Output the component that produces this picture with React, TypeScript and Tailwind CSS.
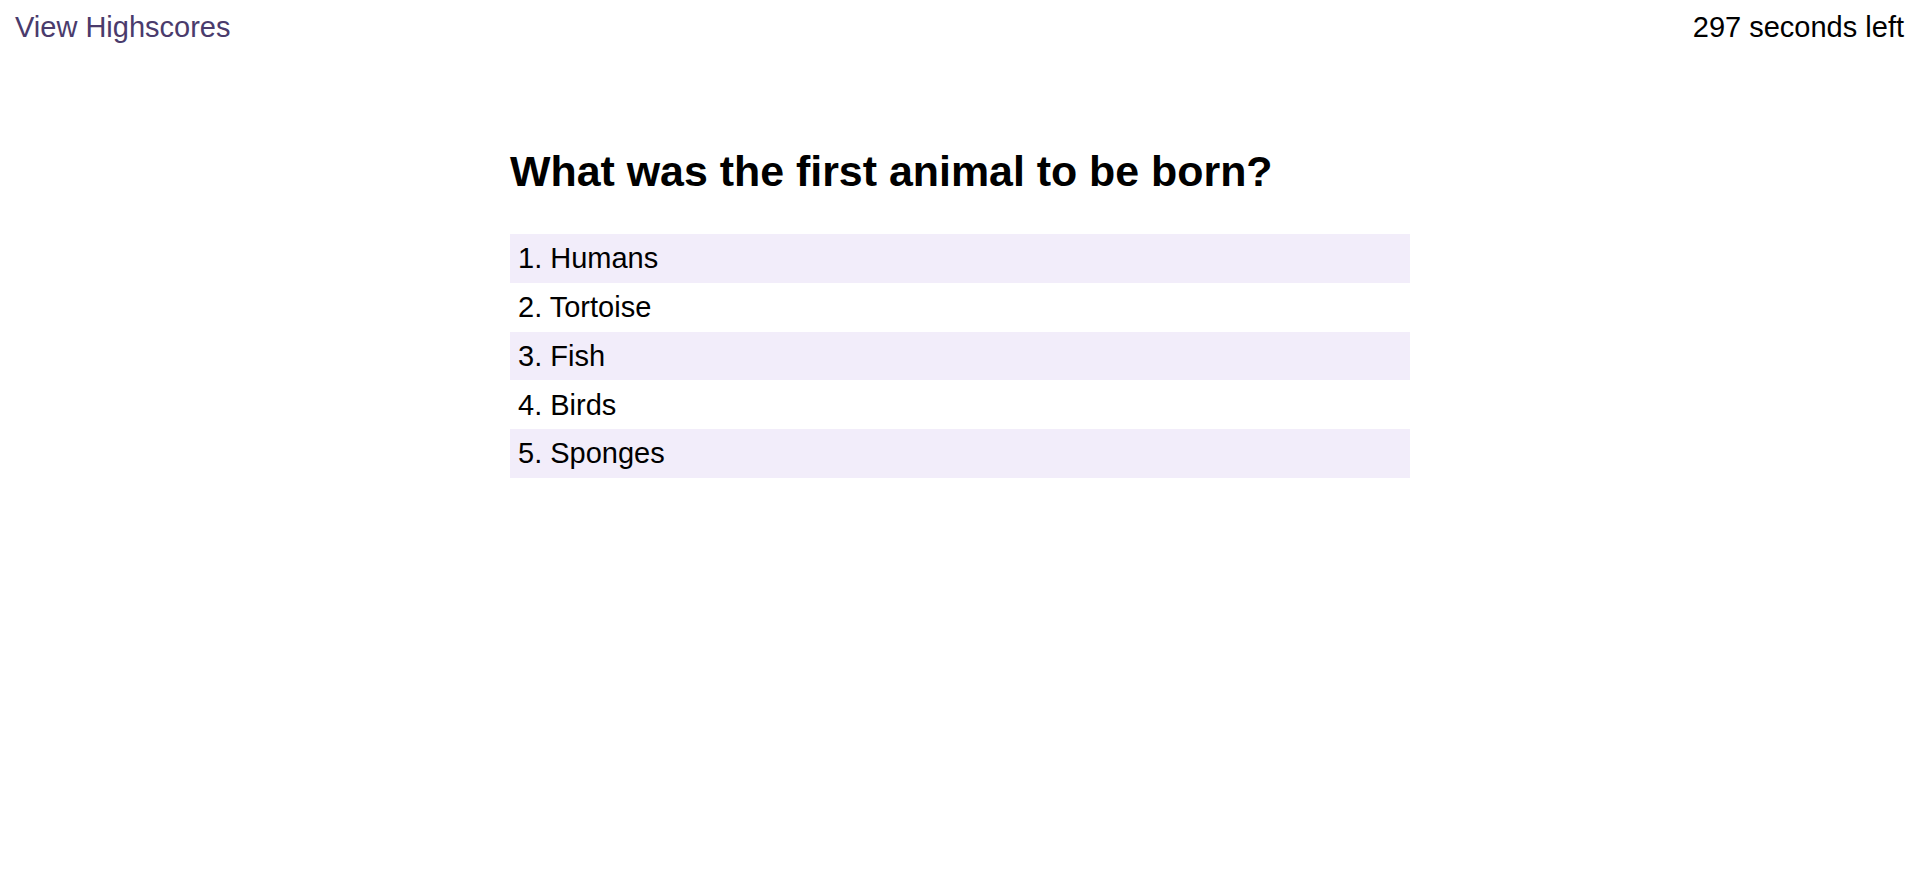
import React from "react";

const answers = ["1. Humans", "2. Tortoise", "3. Fish", "4. Birds", "5. Sponges"];

export default function App() {
  return (
    <div className="min-h-[884px] w-full bg-white text-black" style={{ fontFamily: '"Liberation Sans", Arial, sans-serif' }}>
      <header className="flex items-start justify-between pl-[15px] pr-[16px] pt-[11px]">
        <a className="text-[29px] leading-[33px] text-[#4a3b6c] cursor-pointer">View Highscores</a>
        <div className="text-[29px] leading-[33px] text-black">297 seconds left</div>
      </header>
      <main className="mx-auto w-[900px] pt-[103px]">
        <h1 className="text-[42.9px] font-bold leading-[49px] text-black">What was the first animal to be born?</h1>
        <ol className="mt-[38px]">
          {answers.map((a, i) => (
            <li
              key={a}
              className={`flex h-[48.8px] items-center pl-[8px] pt-[1px] text-[29px] ${i % 2 === 0 ? "bg-[#f2edfa]" : "bg-white"}`}
            >
              {a}
            </li>
          ))}
        </ol>
      </main>
    </div>
  );
}
